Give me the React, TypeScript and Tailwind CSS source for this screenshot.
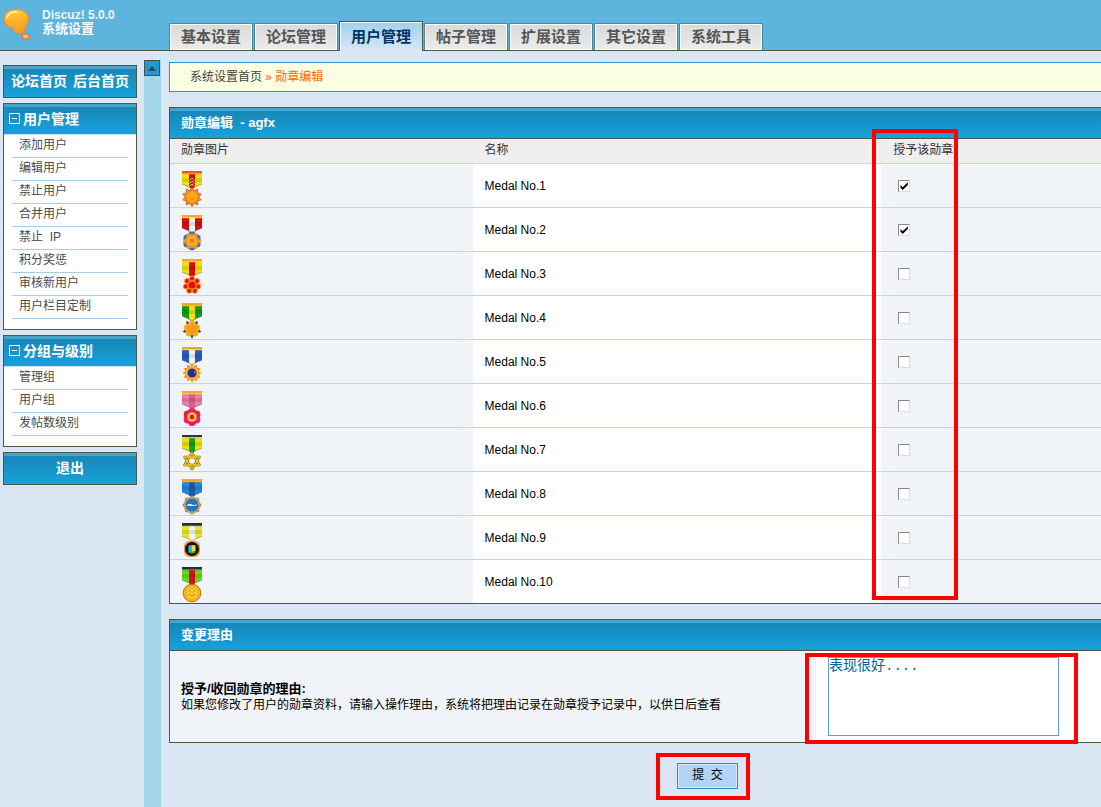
import React, { useState } from "react";

const barClass =
  "border-t-[3px] border-[#4aa3c8] bg-linear-to-b from-[#1787b7] to-[#17a2dc] pb-1 text-white font-bold";

const tabs = ["基本设置", "论坛管理", "用户管理", "帖子管理", "扩展设置", "其它设置", "系统工具"];

const menus = [
  {
    title: "用户管理",
    items: [
      "添加用户",
      "编辑用户",
      "禁止用户",
      "合并用户",
      "禁止\u00a0 IP",
      "积分奖惩",
      "审核新用户",
      "用户栏目定制",
    ],
  },
  { title: "分组与级别", items: ["管理组", "用户组", "发帖数级别"] },
];

type Ribbon = { top: string; under: string; side: string; mid: string };

const ribbons: Ribbon[] = [
  { top: "#ef5a1c", under: "#f79a2a", side: "#f0e010", mid: "#d8100c" },
  { top: "#f8a51c", under: "#ffd83a", side: "#dc0c10", mid: "#f4f4f4" },
  { top: "#f8a51c", under: "#ffcf3a", side: "#f0e010", mid: "#dc0c10" },
  { top: "#f8a51c", under: "#ffb83a", side: "#08a010", mid: "#f0e010" },
  { top: "#f8a51c", under: "#ffe020", side: "#2a5cc0", mid: "#f4f4f4" },
  { top: "#f8a51c", under: "#ffe020", side: "#f07cae", mid: "#d8608c" },
  { top: "#3a3038", under: "#c8c8c8", side: "#e8e408", mid: "#18a018" },
  { top: "#f8a51c", under: "#ffb020", side: "#2088e0", mid: "#1c5ca0" },
  { top: "#2c2c30", under: "#606060", side: "#ece428", mid: "#f6f6f0" },
  { top: "#2c2c30", under: "#707070", side: "#6cd818", mid: "#d81018" },
];

function burst(points: number, outer: number, inner: number, turn = 0): string {
  const list: string[] = [];
  for (let i = 0; i < points * 2; i++) {
    const r = i % 2 === 0 ? outer : inner;
    const a = (Math.PI * i) / points - Math.PI / 2 + turn;
    list.push(`${(10 + r * Math.cos(a)).toFixed(2)},${(26 + r * Math.sin(a)).toFixed(2)}`);
  }
  return list.join(" ");
}

function petals(count: number, distance: number): { x: number; y: number }[] {
  return Array.from({ length: count }, (_, i) => {
    const a = (2 * Math.PI * i) / count - Math.PI / 2;
    return { x: 10 + distance * Math.cos(a), y: 26 + distance * Math.sin(a) };
  });
}

function Pendant({ kind }: { kind: number }) {
  switch (kind) {
    case 0:
      return (
        <>
          <polygon points={burst(10, 9.8, 6.8)} fill="#f58a1c" stroke="#b8480c" strokeWidth="0.6" />
          <circle cx="10" cy="26" r="5.5" fill="#ffab1e" stroke="#f8941a" />
          <path d="M8 25h1M11 25h1M7.5 27.5q2.5 2 5 0" stroke="#e88018" fill="none" />
        </>
      );
    case 1:
      return (
        <>
          {petals(6, 5.6).map((p, i) => (
            <circle key={i} cx={p.x} cy={p.y} r="3.8" fill="#3c6fc4" />
          ))}
          <polygon points={burst(6, 9.5, 6.5, Math.PI / 6)} fill="#f39a1c" />
          <circle cx="10" cy="26" r="6" fill="#fbaa2a" stroke="#e08a18" />
          <circle cx="10" cy="26" r="2.2" fill="#ee7c14" />
        </>
      );
    case 2:
      return (
        <>
          <circle cx="10" cy="26" r="6" fill="#ffc62a" />
          {petals(7, 6.3).map((p, i) => (
            <circle key={i} cx={p.x} cy={p.y} r="2.7" fill="#e41a10" stroke="#ffc62a" strokeWidth="0.7" />
          ))}
          <circle cx="10" cy="26" r="4.6" fill="#f8981c" />
          <circle cx="10" cy="26" r="3.6" fill="#e01010" />
        </>
      );
    case 3:
      return (
        <>
          <polygon points={burst(5, 9.8, 5, Math.PI / 5)} fill="#181c50" />
          {petals(5, 4.6).map((p, i) => (
            <circle key={i} cx={p.x} cy={p.y} r="3.6" fill="#f9a81c" stroke="#ffc838" strokeWidth="0.5" />
          ))}
          <circle cx="10" cy="26" r="5" fill="#f59a18" />
          <path d="M8.5 32h3L10 35z" fill="#148a20" />
        </>
      );
    case 4:
      return (
        <>
          <polygon points={burst(12, 9.8, 7)} fill="#f2981c" />
          <circle cx="10" cy="26" r="6.5" fill="#ffb83a" />
          <circle cx="10" cy="26" r="4.6" fill="#2a2c98" />
          <path d="M12 24l2 1-2 1z" fill="#f2981c" />
        </>
      );
    case 5:
      return (
        <>
          {petals(6, 5).map((p, i) => (
            <circle key={i} cx={p.x} cy={p.y} r="4" fill={i % 2 ? "#ee1c40" : "#f0206c"} />
          ))}
          <circle cx="10" cy="26" r="5.2" fill="#f850a0" />
          <circle cx="10" cy="26" r="4.2" fill="#ffe030" />
          <circle cx="10" cy="26" r="2.4" fill="#e01810" />
        </>
      );
    case 6:
      return (
        <>
          <g fill="none" stroke="#7a6010" strokeWidth="2.4" strokeLinejoin="round">
            <path d="M10 18l7.5 12h-15z" />
            <path d="M10 34L2.5 22h15z" />
          </g>
          <g fill="none" stroke="#f4d01c" strokeWidth="1.4" strokeLinejoin="round">
            <path d="M10 18l7.5 12h-15z" />
            <path d="M10 34L2.5 22h15z" />
          </g>
        </>
      );
    case 7:
      return (
        <>
          <polygon points={burst(8, 9.8, 8)} fill="#5a9ad0" />
          <circle cx="10" cy="26" r="7.4" fill="#2474c4" stroke="#f09a28" strokeWidth="1.6" />
          <path d="M4.5 27q2.5-3.5 5.5-1.5t5.5-1.5q-1 3.5-4 3t-7 0z" fill="#e8f4ff" />
        </>
      );
    case 8:
      return (
        <>
          <rect x="2" y="18" width="16" height="16" rx="5" fill="#f6a860" />
          <circle cx="10" cy="26" r="7.6" fill="#14120e" stroke="#ee9434" strokeWidth="1.2" />
          <path d="M6.5 22.5L10 22v7l-3.5 1z" fill="#2cb4e8" />
          <path d="M10 22l3.5.5v6L10 29z" fill="#f4e02c" />
          <path d="M8 29l5-1v2l-4 .8z" fill="#38a838" />
        </>
      );
    default:
      return (
        <>
          <circle cx="10" cy="26" r="8.8" fill="#f8b81c" stroke="#a86808" strokeWidth="0.9" />
          <circle cx="10" cy="26" r="6.2" fill="#ffc82c" stroke="#eca41c" strokeWidth="0.8" />
          <path d="M7.5 24H9M11 24h1.5M7 27q3 3.5 6 0" stroke="#c8880c" fill="none" />
        </>
      );
  }
}

function Medal({ kind }: { kind: number }) {
  const r = ribbons[kind];
  return (
    <svg width="20" height="36" viewBox="0 0 20 36" className="block" aria-hidden="true">
      <path d="M0 3h20v10l-6 2.5-4 2.5-4-2.5L0 13z" fill={r.side} />
      <path d="M7 3h6v13l-3 2-3-2z" fill={r.mid} />
      <path d="M0 7h20v4H0z" fill="#000" opacity="0.1" />
      <path d="M0 13l6 2.5 4 2.5 4-2.5 6-2.5" fill="none" stroke="#303010" strokeOpacity="0.45" strokeWidth="0.8" />
      <path d="M0 0h20v2H0z" fill={r.top} />
      <path d="M0 2h20v1.2H0z" fill={r.under} />
      {kind === 0 && (
        <path
          d="M7.5 9.5L10 7l2.5 2.5M7.5 12.5L10 10l2.5 2.5M7.5 15.5L10 13l2.5 2.5"
          fill="none"
          stroke="#ffd898"
        />
      )}
      <Pendant kind={kind} />
    </svg>
  );
}

function AwardBox({ id, initial }: { id: string; initial: boolean }) {
  const [on, setOn] = useState(initial);
  return (
    <span className="grid size-3 *:col-start-1 *:row-start-1">
      <input
        id={id}
        type="checkbox"
        checked={on}
        onChange={(e) => setOn(e.target.checked)}
        className="size-3 appearance-none border border-t-[#85898e] border-l-[#85898e] border-r-[#dcdcdc] border-b-[#dcdcdc] bg-white"
      />
      {on && (
        <svg viewBox="0 0 12 12" className="pointer-events-none size-3" aria-hidden="true">
          <path d="M2.5 5v2.8L4.700 10 9.8 5V2.3l-5.100 5z" fill="#000" />
        </svg>
      )}
    </span>
  );
}

function Panel({ title, children }: { title: string; children: React.ReactNode }) {
  return (
    <section className="border-y border-l border-[#4d5a3f] bg-white">
      <h2 className={`${barClass} flex h-[30px] items-center px-[11px] text-[13px] leading-4`}>
        <span className="whitespace-pre">{title}</span>
      </h2>
      {children}
    </section>
  );
}

function Logo() {
  return (
    <svg width="28" height="34" viewBox="0 0 28 34" aria-hidden="true">
      <defs>
        <linearGradient id="bulb" x1="0" y1="0" x2="0.3" y2="1">
          <stop offset="0" stopColor="#ffd84a" />
          <stop offset="0.5" stopColor="#fdb72e" />
          <stop offset="1" stopColor="#f9a01e" />
        </linearGradient>
      </defs>
      <path
        d="M13 1.5c7.500 0 12.500 3.500 12.500 9 0 4-2 5-3 8 .5 4-1.500 7-6 7-4 0-6.500-2-6.500-6C5 20 1 16 1 10.500 1 5 6 1.500 13 1.500z"
        fill="url(#bulb)"
        stroke="#f0874a"
        strokeWidth="1.2"
      />
      <path d="M4 9c1.5-4 5-5.500 10-5" fill="none" stroke="#fff3a8" strokeWidth="1.5" strokeLinecap="round" />
      <ellipse cx="22.500" cy="28.500" rx="3.500" ry="2.500" fill="#ffc53e" stroke="#ee6c3c" strokeWidth="1.2" />
    </svg>
  );
}

export default function App() {
  const [reason, setReason] = useState("表现很好....");
  return (
    <div className="flex min-h-screen flex-col bg-[#dae6f4] font-['Liberation_Sans','Noto_Sans_CJK_SC',sans-serif] text-xs text-black">
      <header className="flex h-[51px] border-b border-[#4d5a3f] bg-[#5db4dc]">
        <div className="flex w-[169px] shrink-0 gap-[11px] pt-2 pl-[3px]">
          <Logo />
          <div className="pt-px text-xs leading-[13px] font-bold text-white">
            <p className="text-[#eef7fc]">Discuz! 5.0.0</p>
            <p className="text-[13px]">系统设置</p>
          </div>
        </div>
        <nav className="flex items-end gap-px">
          {tabs.map((t, i) =>
            i === 2 ? (
              <a
                key={t}
                href="#users"
                aria-current="page"
                className="-mb-px flex h-[30px] w-[84px] items-center justify-center border-x border-t border-[#4d5a3f] bg-linear-to-b from-[#9bd2ee] to-[#dae6f4] text-[15px] font-bold text-[#003366] inset-shadow-[1px_1px_0_#ffffff]"
              >
                {t}
              </a>
            ) : (
              <a
                key={t}
                href="#tab"
                className="flex h-[27px] w-[84px] items-center justify-center border-x border-t border-[#4487a8] bg-linear-to-b from-[#d9d9d9] to-[#ececec] text-[15px] font-bold text-[#555555] inset-shadow-[0_0_0_1px_#ffffff]"
              >
                {t}
              </a>
            ),
          )}
        </nav>
      </header>

      <div className="flex grow">
        <aside className="flex w-36 shrink-0 flex-col gap-[5px] pt-3.5 pr-[7px] pl-[3px]">
          <div className="border border-[#4d5a3f]">
            <div className={`${barClass} flex h-[31px] items-center justify-center gap-1.5 text-sm`}>
              <a href="#home">论坛首页</a>
              <a href="#admin">后台首页</a>
            </div>
          </div>
          {menus.map((m) => (
            <section key={m.title} className="border border-[#4d5a3f] bg-white pb-2.5">
              <h2 className={`${barClass} flex h-[30px] items-center gap-[3px] pl-[5px] text-sm`}>
                <svg width="11" height="11" viewBox="0 0 11 11" aria-hidden="true">
                  <path d="M.5.5h10v10H.5zM3 5.5h5" fill="none" stroke="#fff" />
                </svg>
                {m.title}
              </h2>
              <ul className="border-t border-[#c4e2f2] px-2">
                {m.items.map((it) => (
                  <li key={it} className="h-[23px] border-b border-[#a6cce8] pl-[7px] leading-5 text-[#4a4a4a]">
                    <a href="#item">{it}</a>
                  </li>
                ))}
              </ul>
            </section>
          ))}
          <div className="border border-[#4d5a3f]">
            <a href="#logout" className={`${barClass} flex h-[31px] items-center justify-center text-sm`}>
              退出
            </a>
          </div>
        </aside>

        <div className="mt-[9px] w-[17px] shrink-0 bg-[#a3d5e9]">
          <button
            type="button"
            aria-label="收起菜单"
            className="flex size-4 items-center justify-center border border-[#46545c] bg-[#1b9ad4]"
          >
            <svg width="8" height="5" viewBox="0 0 8 5" aria-hidden="true">
              <path d="M0 5l4-5 4 5z" fill="#46444a" />
            </svg>
          </button>
        </div>

        <main className="flex min-w-0 grow flex-col pt-[11px] pb-[7px] pl-2">
          <div className="flex h-[30px] items-center border-y border-l border-[#1d97cd] bg-[#fbfee0] pl-5 text-[#444444]">
            <a href="#index">系统设置首页</a>
            <span className="whitespace-pre text-[#ff6600]"> » 勋章编辑</span>
          </div>

          <div className="relative mt-[15px]">
            <Panel title="勋章编辑  - agfx">
              <div className="border-t border-[#4d5a3f]">
                <table className="w-full table-fixed border-separate border-spacing-0 text-left">
                  <thead>
                    <tr className="h-6 bg-[#efefef] leading-[22px] text-[#333333]">
                      <th className="w-[32.5%] px-[11px] pb-0.5 font-normal">勋章图片</th>
                      <th className="w-[43.9%] px-3 pb-0.5 font-normal">名称</th>
                      <th className="px-3 pb-0.5 font-normal">授予该勋章</th>
                    </tr>
                  </thead>
                  <tbody className="*:*:border-t *:*:border-[#b4daee]">
                    {ribbons.map((_, i) => (
                      <tr key={i} className="h-11">
                        <td className="bg-[#f0f4f8] px-3 pt-[7px] align-top">
                          <Medal kind={i} />
                        </td>
                        <td className="px-3">
                          <label htmlFor={`medal-${i + 1}`}>Medal No.{i + 1}</label>
                        </td>
                        <td className="bg-[#f0f4f8] px-[17px]">
                          <AwardBox id={`medal-${i + 1}`} initial={i < 2} />
                        </td>
                      </tr>
                    ))}
                  </tbody>
                </table>
              </div>
            </Panel>
            <div className="pointer-events-none absolute top-[22px] bottom-1 left-[75.4%] w-[86px] border-4 border-[#ff0000]" />
          </div>

          <div className="relative mt-[15px]">
            <Panel title="变更理由">
              <div className="flex h-[92px] border-t border-[#4d5a3f]">
                <div className="flex grow flex-col justify-center bg-[#f0f4f8] pl-[11px] leading-[17px]">
                  <label htmlFor="reason" className="text-[13px] font-bold">
                    授予/收回勋章的理由:
                  </label>
                  <p>如果您修改了用户的勋章资料，请输入操作理由，系统将把理由记录在勋章授予记录中，以供日后查看</p>
                </div>
                <div className="w-[285px] shrink-0 bg-white pt-1.5 pl-3">
                  <textarea
                    id="reason"
                    value={reason}
                    onChange={(e) => setReason(e.target.value)}
                    className="block h-[79px] w-[231px] resize-none border border-[#5f9dd4] bg-white font-['Liberation_Mono','Noto_Sans_CJK_SC',monospace] text-sm leading-[17px] text-[#006699]"
                  />
                </div>
              </div>
            </Panel>
            <div className="pointer-events-none absolute top-[34px] right-[23px] -bottom-px w-[273px] border-4 border-[#ff0000]" />
          </div>

          <div className="mt-2.5 flex justify-center pl-[136px]">
            <div className="border-4 border-[#ff0000] pt-1.5 pr-2 pb-[7px] pl-[17px]">
              <button
                type="submit"
                className="block h-[26px] w-[61px] border border-[#1d95c4] bg-[#b2d3f5] pb-0.5 text-xs inset-shadow-[0_0_0_1px_#d8eafa]"
              >
                <span className="whitespace-pre">提  交</span>
              </button>
            </div>
          </div>
        </main>
      </div>
    </div>
  );
}
